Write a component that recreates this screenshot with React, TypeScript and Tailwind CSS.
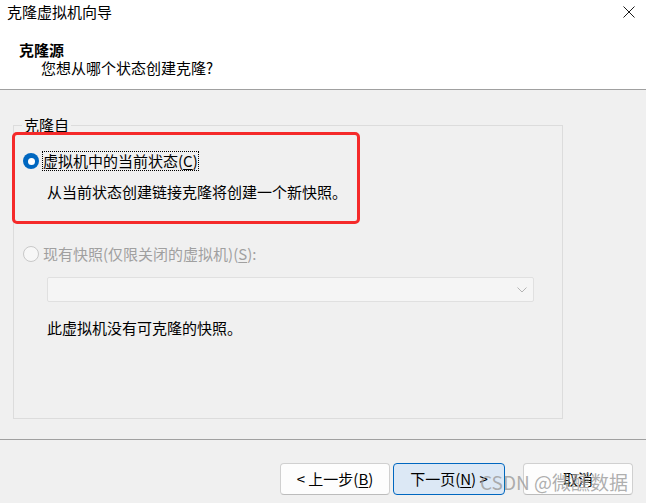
import { useState } from 'react'

const font = { fontFamily: '"Noto Sans CJK SC", "Noto Sans", sans-serif' }

function Radio({ checked, disabled }: { checked?: boolean; disabled?: boolean }) {
  if (checked) {
    return (
      <span className="flex h-4 w-4 shrink-0 items-center justify-center rounded-full bg-[#0067c0]">
        <span className="h-[7px] w-[7px] rounded-full bg-white" />
      </span>
    )
  }
  return (
    <span
      className={`h-4 w-4 shrink-0 rounded-full border ${
        disabled ? 'border-[#c8c8c8] bg-[#f7f7f7]' : 'border-[#8a8a8a] bg-white'
      }`}
    />
  )
}

function Button({ children, primary }: { children: React.ReactNode; primary?: boolean }) {
  return (
    <button
      className={`flex h-[32px] items-center justify-center rounded-[4px] border text-[15px] leading-[18px] text-black ${
        primary
          ? 'w-[112px] border-[#0067c0] bg-[#dce8f5]'
          : 'w-[110px] border-[#d0d0d0] border-b-[#bcbcbc] bg-[#fdfdfd]'
      }`}
    >
      {children}
    </button>
  )
}

export default function App() {
  const [source] = useState<'current' | 'snapshot'>('current')

  return (
    <div className="relative flex h-[503px] w-[646px] flex-col overflow-hidden bg-[#f0f0f0]" style={font}>
      {/* Header */}
      <div className="h-[90px] shrink-0 border-b border-[#a0a0a0] bg-white">
        <div className="flex h-[22px] items-start justify-between pl-[7px] pr-[11px] pt-[2px]">
          <span className="text-[15px] leading-[20px] text-black">克隆虚拟机向导</span>
          <svg width="12" height="12" viewBox="0 0 12 12" className="mt-[4px]">
            <path d="M0.5 0.5 L11.5 11.5 M11.5 0.5 L0.5 11.5" stroke="#1a1a1a" strokeWidth="1" />
          </svg>
        </div>
        <div className="mt-[19px] pl-[19px] text-[15px] font-bold leading-[18px] text-black">克隆源</div>
        <div className="pl-[41px] text-[15px] leading-[18px] text-black">您想从哪个状态创建克隆?</div>
      </div>

      {/* Body */}
      <div className="h-[349px] shrink-0 pl-[13px] pt-[35px]">
        <div className="relative h-[294px] w-[550px] border border-[#dcdcdc]">
          <span className="absolute left-[8px] top-[-10px] bg-[#f0f0f0] px-[2px] text-[15px] leading-[18px] text-black">
            克隆自
          </span>

          <div className="ml-[9px] mt-[25px] flex h-[20px] items-center">
            <Radio checked={source === 'current'} />
            <span className="ml-[3px] h-[20px] border border-dotted border-black text-[15px] leading-[18px] text-black">
              虚拟机中的当前状态(<span className="underline underline-offset-2">C</span>)
            </span>
          </div>
          <div className="ml-[33px] mt-[12px] text-[15px] leading-[18px] text-black">
            从当前状态创建链接克隆将创建一个新快照。
          </div>

          <div className="ml-[9px] mt-[43px] flex h-[20px] items-center">
            <Radio disabled />
            <span className="ml-[3px] h-[20px] border border-transparent text-[15px] leading-[18px] text-[#a0a0a0]">
              现有快照(仅限关闭的虚拟机)(<span className="underline underline-offset-2">S</span>):
            </span>
          </div>

          <div className="ml-[33px] mt-[13px] flex h-[25px] w-[487px] items-center justify-end rounded-[2px] border border-[#e0e0e0] bg-[#f5f5f5] pr-[6px]">
            <svg width="10" height="6" viewBox="0 0 10 6">
              <path d="M0.5 0.5 L5 5 L9.5 0.5" stroke="#b4b4b4" strokeWidth="1" fill="none" />
            </svg>
          </div>

          <div className="ml-[33px] mt-[17px] text-[15px] leading-[18px] text-black">此虚拟机没有可克隆的快照。</div>

          {/* Annotation box */}
          <div className="absolute left-[-2px] top-[6px] h-[92px] w-[348px] rounded-[5px] border-[3px] border-[#f52a2a]" />
        </div>
      </div>

      {/* Footer */}
      <div className="flex flex-1 items-start justify-end border-t border-[#a0a0a0] pr-[13px] pt-[23px]">
        <Button>
          &lt; 上一步(<span className="underline underline-offset-2">B</span>)
        </Button>
        <div className="w-[3px]" />
        <Button primary>
          下一页(<span className="underline underline-offset-2">N</span>) &gt;
        </Button>
        <div className="w-[18px]" />
        <Button>取消</Button>
      </div>

      {/* Watermark */}
      <span className="pointer-events-none absolute left-[480px] top-[470px] text-[19px] leading-[24px] text-[#9a9a9a]/80">
        CSDN @微醺数据
      </span>
    </div>
  )
}
